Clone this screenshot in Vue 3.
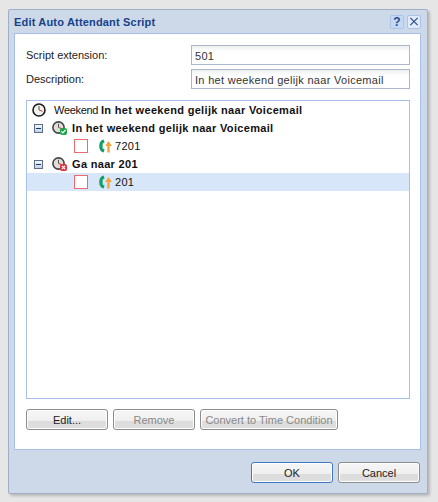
<template>
  <div class="page">
    <div class="dialog">
      <div class="dialog__title">
        <span class="dialog__caption">Edit Auto Attendant Script</span>
        <button class="tool-btn tool-btn--help">?</button>
        <button class="tool-btn">
          <svg width="13" height="13" viewBox="0 0 13 13">
            <path d="M2.5 2.5l8 8M10.5 2.5l-8 8" stroke="#2a4a8c" stroke-width="1.2" fill="none" />
          </svg>
        </button>
      </div>

      <div class="dialog__body">
        <div class="field">
          <label class="field__label">Script extension:</label>
          <input class="field__input" type="text" value="501" />
        </div>
        <div class="field field--second">
          <label class="field__label">Description:</label>
          <input class="field__input" type="text" value="In het weekend gelijk naar Voicemail" />
        </div>

        <div class="tree">
          <div
            v-for="row in rows"
            :key="row.id"
            class="tree__row"
            :class="{ 'tree__row--selected': row.selected, 'tree__row--leaf': row.type === 'phone' }"
          >
            <template v-if="row.type === 'root'">
              <svg class="clock" width="14" height="14" viewBox="0 0 14 14">
                <circle cx="7" cy="7" r="6" fill="#f2f2ec" stroke="#1c1c1c" stroke-width="1.6" />
                <path d="M7 3v4" stroke="#555" stroke-width="1" />
                <path d="M7 7l3.5 1.3" stroke="#c33" stroke-width="1" />
              </svg>
              <span class="tree__text tree__text--root">Weekend <b>{{ row.label }}</b></span>
            </template>

            <template v-else-if="row.type === 'group'">
              <span class="expander"></span>
              <svg class="clock" width="15" height="14" viewBox="0 0 15 14">
                <circle cx="6.5" cy="6.5" r="5.6" fill="#dededa" stroke="#444" stroke-width="1.6" />
                <path d="M6.5 2.8v3.7" stroke="#555" stroke-width="1" />
                <path d="M6.5 6.5l3 1" stroke="#c33" stroke-width="1" />
                <template v-if="row.status === 'ok'">
                  <rect x="8" y="7" width="7" height="7" rx="2" fill="#1ea64a" />
                  <path d="M9.3 10.4l1.5 1.5 2.8-3" stroke="#fff" stroke-width="1.3" fill="none" />
                </template>
                <template v-else>
                  <rect x="8" y="7" width="7" height="7" rx="2" fill="#e0313c" />
                  <path d="M9.9 8.9l3.2 3.2M13.1 8.9l-3.2 3.2" stroke="#fff" stroke-width="1.3" />
                </template>
              </svg>
              <b class="tree__text tree__text--group">{{ row.label }}</b>
            </template>

            <template v-else>
              <span class="check"></span>
              <svg class="phone" width="13" height="14" viewBox="0 0 13 14">
                <path d="M4.6 0.4C1.6 1 0.2 3.6 0.2 7s1.4 6 4.4 6.6L5.6 10.6 3.9 9.8C3.5 8.2 3.5 5.8 3.9 4.2L5.6 3.4z" fill="#14a06a" />
                <path d="M9.5 2L12.9 7H10.7v6.5H8.3V7H6.1z" fill="#f5a33c" />
              </svg>
              <span class="tree__text">{{ row.label }}</span>
            </template>
          </div>
        </div>

        <div class="actions">
          <button class="btn btn--wide">Edit...</button>
          <button class="btn btn--wide" disabled>Remove</button>
          <button class="btn btn--convert" disabled>Convert to Time Condition</button>
        </div>
      </div>

      <div class="dialog__footer">
        <button class="btn btn--wide btn--default">OK</button>
        <button class="btn btn--wide">Cancel</button>
      </div>
    </div>
  </div>
</template>

<script setup>
const rows = [
  { id: 1, type: 'root', label: 'In het weekend gelijk naar Voicemail' },
  { id: 2, type: 'group', status: 'ok', label: 'In het weekend gelijk naar Voicemail' },
  { id: 3, type: 'phone', label: '7201' },
  { id: 4, type: 'group', status: 'fail', label: 'Ga naar 201' },
  { id: 5, type: 'phone', label: '201', selected: true }
]
</script>

<style>
html,
body {
  margin: 0;
  background: #e6e6e6;
}
</style>

<style scoped>
.page {
  width: 438px;
  height: 502px;
  padding: 9px 10px 8px 8px;
  box-sizing: border-box;
  background: #e6e6e6;
  font-family: "Liberation Sans", Arial, sans-serif;
  font-size: 11px;
  color: #222;
}

.dialog {
  height: 100%;
  box-sizing: border-box;
  display: flex;
  flex-direction: column;
  background: #cdd9e8;
  border: 1px solid #9db0c8;
  border-radius: 2px;
  box-shadow: 2px 2px 3px rgba(0, 0, 0, 0.2);
}

.dialog__title {
  height: 23px;
  display: flex;
  align-items: center;
  padding: 0 6px 0 5px;
  gap: 3px;
}

.dialog__caption {
  flex: 1;
  font-size: 11px;
  font-weight: bold;
  letter-spacing: 0.18px;
  color: #15428b;
}

.tool-btn {
  width: 14px;
  height: 14px;
  padding: 0;
  display: flex;
  align-items: center;
  justify-content: center;
  background: #dfeafa;
  border: 1px solid #a9c4e8;
  border-radius: 2px;
  font: bold 12px "Liberation Sans", sans-serif;
  color: #2a4a8c;
}

.tool-btn--help {
  background: #c4d9f5;
}

.dialog__body {
  height: 417px;
  margin: 0 6px 0 5px;
  box-sizing: border-box;
  padding: 11px 10px 0 11px;
  background: #fff;
  border: 1px solid #a6c0e8;
}

.field {
  display: flex;
  align-items: center;
  justify-content: space-between;
  height: 20px;
}

.field--second {
  margin-top: 4px;
}

.field__input {
  width: 219px;
  height: 20px;
  box-sizing: border-box;
  padding: 1px 3px 0;
  border: 1px solid #aeb6cc;
  background: linear-gradient(#eef0f0, #fff 6px);
  font: 11px "Liberation Sans", sans-serif;
  letter-spacing: 0.3px;
  color: #333;
  outline: none;
}

.tree {
  margin-top: 11px;
  height: 299px;
  box-sizing: border-box;
  border: 1px solid #a6c0e8;
  background: #fff;
}

.tree__row {
  height: 18px;
  display: flex;
  align-items: center;
  padding-left: 5px;
  color: #111;
}

.tree__row--leaf {
  padding-left: 47px;
}

.tree__row--selected {
  background: #d7e6f8;
}

.tree__text {
  margin-left: 8px;
  white-space: nowrap;
}

.tree__text--root {
  letter-spacing: -0.3px;
}

.tree__text b {
  letter-spacing: 0.32px;
}

.tree__text--group {
  margin-left: 5px;
  letter-spacing: 0.32px;
}

.tree__row--leaf .tree__text {
  margin-left: 3px;
  letter-spacing: 0.3px;
}

.expander {
  position: relative;
  width: 9px;
  height: 9px;
  margin-left: 2px;
  margin-right: 9px;
  box-sizing: border-box;
  border: 1px solid #5a6c8c;
  background: linear-gradient(#f6f8fc, #c4d0e4);
}

.expander::after {
  content: "";
  position: absolute;
  left: 1px;
  right: 1px;
  top: 3px;
  height: 1px;
  background: #1c3560;
}

.check {
  width: 14px;
  height: 14px;
  box-sizing: border-box;
  border: 1px solid #ee6a70;
  background: #fff;
  margin-right: 11px;
}

.btn {
  height: 21px;
  padding: 0 5px;
  box-sizing: border-box;
  border: 1px solid #8c8c8c;
  border-radius: 3px;
  background: linear-gradient(#f6f6f6 0, #efefef 58%, #dcdcdc 59%, #dfdfdf 100%);
  box-shadow: inset 0 0 0 1px #fff;
  font: 11px "Liberation Sans", sans-serif;
  color: #222;
}

.btn:disabled {
  color: #888;
}

.btn--wide {
  width: 82px;
}

.btn--convert {
  width: 138px;
  padding: 0;
}

.btn--default {
  border-color: #3f78c4;
}

.actions {
  display: flex;
  gap: 5px;
  margin-top: 10px;
}

.dialog__footer {
  display: flex;
  justify-content: flex-end;
  gap: 5px;
  padding: 12px 7px 0 0;
}
</style>
